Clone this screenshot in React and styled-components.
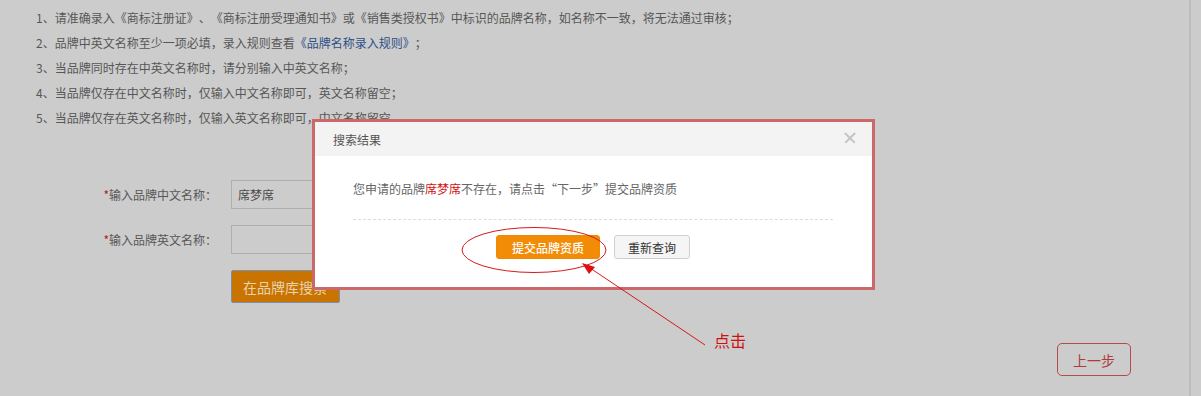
import React from 'react';
import styled, { createGlobalStyle } from 'styled-components';

const Global = createGlobalStyle`
  html, body { margin: 0; padding: 0; }
  body {
    background: #cccccc;
    font-family: "Noto Sans CJK SC", "Liberation Sans", sans-serif;
    font-size: 12px;
    color: #575757;
    text-spacing-trim: space-all;
  }
  button { text-spacing-trim: space-all; }
`;

const Page = styled.div`
  position: relative;
  width: 1201px;
  height: 396px;
  overflow: hidden;
  background: #cccccc;
`;

const Rail = styled.div`
  position: absolute;
  top: 0;
  bottom: 0;
  left: 1189px;
  width: 2px;
  background: #bdbdbd;
`;

const Tips = styled.ul`
  list-style: none;
  margin: 0;
  padding: 5px 0 0 36px;
`;

const Tip = styled.li`
  height: 25px;
  line-height: 25px;
  font-size: 12px;
  color: #575757;
`;

const Link = styled.a`
  color: #2d4f86;
  text-decoration: none;
`;

const Form = styled.div`
  display: flex;
  flex-direction: column;
  gap: 16px;
  padding: 50px 0 0 0;
`;

const Row = styled.div`
  display: flex;
  align-items: center;
`;

const Label = styled.label`
  width: 231px;
  padding-right: 14px;
  box-sizing: border-box;
  text-align: right;
  color: #575757;
  font-size: 12px;
  white-space: nowrap;
`;

const Star = styled.span`
  color: #b02020;
`;

const Input = styled.div`
  width: 200px;
  height: 29px;
  box-sizing: border-box;
  border: 1px solid #aeaeae;
  padding-left: 6px;
  line-height: 27px;
  font-size: 12px;
  color: #4a4a4a;
`;

const SearchButton = styled.button`
  margin-left: 231px;
  width: 109px;
  height: 33px;
  border: 1px solid #7c8fae;
  border-radius: 2px;
  background: #c97400;
  color: #e8d2b0;
  font-family: inherit;
  font-size: 14px;
  text-align: left;
  padding-left: 11px;
`;

const BackRow = styled.div`
  display: flex;
  justify-content: flex-end;
  padding: 40px 70px 0 0;
`;

const BackButton = styled.button`
  width: 74px;
  height: 33px;
  border: 1px solid #b44a4a;
  border-radius: 5px;
  background: transparent;
  color: #b03a3a;
  font-family: inherit;
  font-size: 14px;
`;

const Dialog = styled.div`
  position: absolute;
  left: 312px;
  top: 119px;
  width: 563px;
  height: 171px;
  box-sizing: border-box;
  border: 3px solid #cc6868;
  background: #ffffff;
  display: flex;
  flex-direction: column;
`;

const DialogHead = styled.div`
  height: 34px;
  background: #f3f3f3;
  display: flex;
  align-items: center;
  justify-content: space-between;
  padding: 0 16px 0 18px;
  color: #555;
  font-size: 12px;
`;

const Close = styled.span`
  width: 12px;
  height: 12px;
  position: relative;
  margin-top: -3px;
  &::before, &::after {
    content: "";
    position: absolute;
    left: -1px;
    top: 5px;
    width: 14px;
    height: 1.5px;
    background: #c4c4c4;
    transform: rotate(45deg);
  }
  &::after { transform: rotate(-45deg); }
`;

const DialogBody = styled.div`
  padding: 0 39px 0 38px;
`;

const Message = styled.p`
  margin: 0;
  height: 63px;
  line-height: 66px;
  color: #666;
  font-size: 12px;
  border-bottom: 1px dashed #dcdcdc;
`;

const Hl = styled.span`
  color: #d01010;
`;

const Actions = styled.div`
  display: flex;
  justify-content: center;
  gap: 14px;
  padding-top: 15px;
`;

const ActionButton = styled.button`
  height: 24px;
  padding: 0 ${p => (p.$primary ? 15 : 13)}px;
  border-radius: 3px;
  border: 1px solid ${p => (p.$primary ? '#f08a00' : '#cfcfcf')};
  background: ${p => (p.$primary ? '#f28c06' : '#f5f5f5')};
  color: ${p => (p.$primary ? '#ffffff' : '#333')};
  font-family: inherit;
  font-size: 12px;
  font-weight: ${p => (p.$primary ? 500 : 'normal')};
`;

const Note = styled.svg`
  position: absolute;
  left: 0;
  top: 0;
  pointer-events: none;
`;

const ClickText = styled.span`
  position: absolute;
  left: 714px;
  top: 330px;
  color: #cc1010;
  font-size: 16px;
  line-height: 20px;
`;

export default function App() {
  return (
    <Page>
      <Global />
      <Rail />
      <Tips>
        <Tip>1、请准确录入《商标注册证》、《商标注册受理通知书》或《销售类授权书》中标识的品牌名称，如名称不一致，将无法通过审核；</Tip>
        <Tip>2、品牌中英文名称至少一项必填，录入规则查看<Link>《品牌名称录入规则》</Link>；</Tip>
        <Tip>3、当品牌同时存在中英文名称时，请分别输入中英文名称；</Tip>
        <Tip>4、当品牌仅存在中文名称时，仅输入中文名称即可，英文名称留空；</Tip>
        <Tip>5、当品牌仅存在英文名称时，仅输入英文名称即可，中文名称留空。</Tip>
      </Tips>
      <Form>
        <Row>
          <Label><Star>*</Star>输入品牌中文名称：</Label>
          <Input>席梦席</Input>
        </Row>
        <Row>
          <Label><Star>*</Star>输入品牌英文名称：</Label>
          <Input />
        </Row>
        <Row>
          <SearchButton>在品牌库搜索</SearchButton>
        </Row>
      </Form>
      <BackRow>
        <BackButton>上一步</BackButton>
      </BackRow>

      <Dialog>
        <DialogHead>
          <span>搜索结果</span>
          <Close />
        </DialogHead>
        <DialogBody>
          <Message>
            您申请的品牌<Hl>席梦席</Hl>不存在，请点击“下一步”提交品牌资质
          </Message>
          <Actions>
            <ActionButton $primary>提交品牌资质</ActionButton>
            <ActionButton>重新查询</ActionButton>
          </Actions>
        </DialogBody>
      </Dialog>

      <Note width="1201" height="396" viewBox="0 0 1201 396">
        <ellipse cx="534" cy="250" rx="72" ry="22.5" fill="none" stroke="#d41a1a" strokeWidth="1" />
        <line x1="705" y1="345" x2="590" y2="268" stroke="#d41a1a" strokeWidth="1" />
        <polygon points="582,263 595,267 589,274" fill="#e01010" />
      </Note>
      <ClickText>点击</ClickText>
    </Page>
  );
}
